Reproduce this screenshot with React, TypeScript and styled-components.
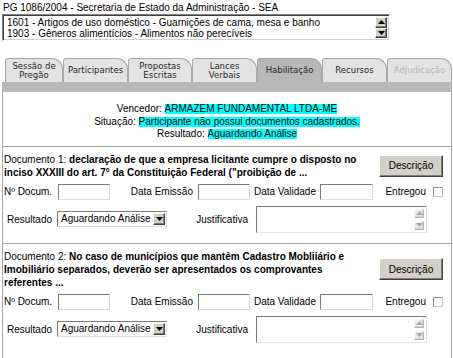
import styled, { createGlobalStyle } from 'styled-components'

const GlobalStyle = createGlobalStyle`
	html, body {
		margin: 0;
		padding: 0;
		background: #fff;
	}
	body {
		font-family: "Liberation Sans", Arial, sans-serif;
		font-size: 10px;
		color: #000;
	}
`

const Page = styled.div`
	width: 453px;
	height: 358px;
	overflow: hidden;
	box-sizing: border-box;
	padding: 1px 1px 0 2px;
	display: flex;
	flex-direction: column;
`

const Title = styled.div`
	padding-left: 1px;
	line-height: 13px;
	white-space: nowrap;
`

const ListBox = styled.div`
	width: 388px;
	height: 27px;
	box-sizing: border-box;
	display: flex;
	background: #fff;
	border: 1px solid;
	border-color: #808080 #fff #fff #808080;
	box-shadow: inset 1px 1px 0 #404040, inset -1px -1px 0 #d4d0c8;
`

const ListRows = styled.div`
	flex: 1;
	padding: 2px 0 0 4px;
	line-height: 11px;
	white-space: nowrap;
	overflow: hidden;
`

const ScrollCol = styled.div<{ $w: number; $gap?: number }>`
	width: ${(p) => p.$w}px;
	display: flex;
	flex-direction: column;
	justify-content: space-between;
	gap: ${(p) => p.$gap ?? 0}px;
	padding: 2px 2px 2px 0;
	box-sizing: border-box;
`

const ArrowBtn = styled.div<{ $off?: boolean }>`
	flex: 1;
	display: flex;
	align-items: center;
	justify-content: center;
	box-sizing: border-box;
	background: ${(p) => (p.$off ? '#ebebeb' : '#d4d0c8')};
	border: 1px solid;
	border-color: ${(p) => (p.$off ? '#f8f8f8 #b4b4b4 #b4b4b4 #f8f8f8' : '#fff #404040 #404040 #fff')};
	box-shadow: inset -1px -1px 0 ${(p) => (p.$off ? '#d4d4d4' : '#808080')};
`

const Tri = ({ down, color = '#000' }: { down?: boolean; color?: string }) => (
	<svg width="7" height="4" viewBox="0 0 7 4">
		<path d={down ? 'M0 0h7L3.5 4z' : 'M0 4h7L3.5 0z'} fill={color} />
	</svg>
)

const TabBar = styled.div`
	display: flex;
	margin-top: 17px;
	padding-left: 3px;
	height: 24px;
`

const Tab = styled.div<{ $w: number; $active?: boolean; $disabled?: boolean }>`
	width: ${(p) => p.$w}px;
	display: flex;
	align-items: center;
	justify-content: center;
	text-align: center;
	box-sizing: border-box;
	font-family: "DejaVu Sans", Verdana, sans-serif;
	font-size: 8.5px;
	line-height: 9px;
	color: ${(p) => (p.$disabled ? '#b8b8b8' : '#2a2a2a')};
	background: ${(p) => (p.$active ? '#b8b8b8' : '#e3e3e3')};
	border: 1px solid #a8a8a8;
	border-bottom: none;
	border-radius: 3px 11px 0 0;
`

const GreyBar = styled.div`
	height: 10px;
	background: #b8b8b8;
`

const Panel = styled.div`
	flex: 1;
	border-left: 1px solid #a8a8a8;
	border-right: 1px solid #a8a8a8;
`

const Winner = styled.div`
	text-align: center;
	line-height: 12.5px;
	padding: 11px 0 5px;
`

const Hi = styled.span`
	display: inline-block;
	line-height: 10px;
	background: #00ffff;
`

const Doc = styled.div`
	border-top: 1px solid #a8a8a8;
	padding: 6px 8px 10px 1px;
`

const DocHead = styled.div`
	display: flex;
	align-items: center;
`

const DocText = styled.div`
	width: 360px;
	line-height: 13px;
	b {
		font-weight: bold;
	}
`

const Button = styled.button`
	margin-left: auto;
	width: 64px;
	height: 22px;
	padding: 0;
	font-family: "Liberation Sans", Arial, sans-serif;
	font-size: 10px;
	color: #000;
	background: #d4d0c8;
	border: 1px solid;
	border-color: #fff #404040 #404040 #fff;
	box-shadow: inset -1px -1px 0 #808080;
`

const FieldRow = styled.div<{ $top: number }>`
	display: flex;
	align-items: center;
	margin-top: ${(p) => p.$top}px;
`

const Label = styled.span<{ $w: number; $pr?: number }>`
	width: ${(p) => p.$w}px;
	box-sizing: border-box;
	padding-right: ${(p) => p.$pr ?? 0}px;
	text-align: ${(p) => (p.$pr ? 'right' : 'left')};
	white-space: nowrap;
`

const sunken = `
	box-sizing: border-box;
	background: #fff;
	border: 1px solid;
	border-color: #7c7c7c #dcdcdc #dcdcdc #7c7c7c;
`

const TextInput = styled.input<{ $w: number }>`
	${sunken}
	width: ${(p) => p.$w}px;
	height: 16px;
	padding: 0;
	margin: 0;
`

const Check = styled.span`
	${sunken}
	width: 10px;
	height: 10px;
	border-color: #8c8c8c #c8c8c8 #c8c8c8 #8c8c8c;
`

const Select = styled.div`
	${sunken}
	width: 110px;
	height: 16px;
	display: flex;
	align-items: stretch;
	padding: 1px;
`

const SelectValue = styled.span`
	flex: 1;
	padding-left: 2px;
	line-height: 12px;
	white-space: nowrap;
`

const SelectArrow = styled(ArrowBtn)`
	flex: 0 0 12px;
`

const TextArea = styled.div`
	${sunken}
	width: 171px;
	height: 27px;
	display: flex;
	justify-content: flex-end;
	border-color: #7c7c7c #e4e4e4 #e4e4e4 #7c7c7c;
`

const tabs: { label: string[]; w: number; active?: boolean; disabled?: boolean }[] = [
	{ label: ['Sessão de', 'Pregão'], w: 58 },
	{ label: ['Participantes'], w: 65 },
	{ label: ['Propostas', 'Escritas'], w: 64 },
	{ label: ['Lances', 'Verbais'], w: 65 },
	{ label: ['Habilitação'], w: 65, active: true },
	{ label: ['Recursos'], w: 65 },
	{ label: ['Adjudicação'], w: 65, disabled: true },
]

const DocFields = () => (
	<>
		<FieldRow $top={5}>
			<Label $w={54}>Nº Docum.</Label>
			<TextInput $w={52} />
			<Label $w={88} $pr={5}>Data Emissão</Label>
			<TextInput $w={52} />
			<Label $w={70} $pr={4}>Data Validade</Label>
			<TextInput $w={53} />
			<Label $w={60} $pr={7}>Entregou</Label>
			<Check />
		</FieldRow>
		<FieldRow $top={6}>
			<Label $w={53} $pr={5}>Resultado</Label>
			<Select>
				<SelectValue>Aguardando Análise</SelectValue>
				<SelectArrow>
					<Tri down />
				</SelectArrow>
			</Select>
			<Label $w={89} $pr={8}>Justificativa</Label>
			<TextArea>
				<ScrollCol $w={12} $gap={3}>
					<ArrowBtn $off>
						<Tri color="#a8a8a8" />
					</ArrowBtn>
					<ArrowBtn $off>
						<Tri down color="#a8a8a8" />
					</ArrowBtn>
				</ScrollCol>
			</TextArea>
		</FieldRow>
	</>
)

export default function App() {
	return (
		<>
			<GlobalStyle />
			<Page>
				<Title>PG 1086/2004 - Secretaria de Estado da Administração - SEA</Title>
				<ListBox>
					<ListRows>
						<div>1601 - Artigos de uso doméstico - Guarnições de cama, mesa e banho</div>
						<div>1903 - Gêneros alimentícios - Alimentos não perecíveis</div>
					</ListRows>
					<ScrollCol $w={14}>
						<ArrowBtn>
							<Tri />
						</ArrowBtn>
						<ArrowBtn>
							<Tri down />
						</ArrowBtn>
					</ScrollCol>
				</ListBox>

				<TabBar>
					{tabs.map((t) => (
						<Tab key={t.label.join(' ')} $w={t.w} $active={t.active} $disabled={t.disabled}>
							<div>
								{t.label.map((l) => (
									<div key={l}>{l}</div>
								))}
							</div>
						</Tab>
					))}
				</TabBar>
				<GreyBar />

				<Panel>
					<Winner>
						<div>
							Vencedor: <Hi>ARMAZEM FUNDAMENTAL LTDA-ME</Hi>
						</div>
						<div>
							Situação: <Hi>Participante não possui documentos cadastrados.</Hi>
						</div>
						<div>
							Resultado: <Hi>Aguardando Análise</Hi>
						</div>
					</Winner>

					<Doc>
						<DocHead>
							<DocText>
								Documento 1:{' '}
								<b>
									declaração de que a empresa licitante cumpre o disposto no inciso XXXIII do art. 7° da
									Constituição Federal ("proibição de ...
								</b>
							</DocText>
							<Button>Descrição</Button>
						</DocHead>
						<DocFields />
					</Doc>

					<Doc>
						<DocHead>
							<DocText>
								Documento 2:{' '}
								<b>
									No caso de municípios que mantêm Cadastro Mobliiário e Imobiliário separados, deverão ser
									apresentados os comprovantes referentes ...
								</b>
							</DocText>
							<Button>Descrição</Button>
						</DocHead>
						<DocFields />
					</Doc>
				</Panel>
			</Page>
		</>
	)
}
